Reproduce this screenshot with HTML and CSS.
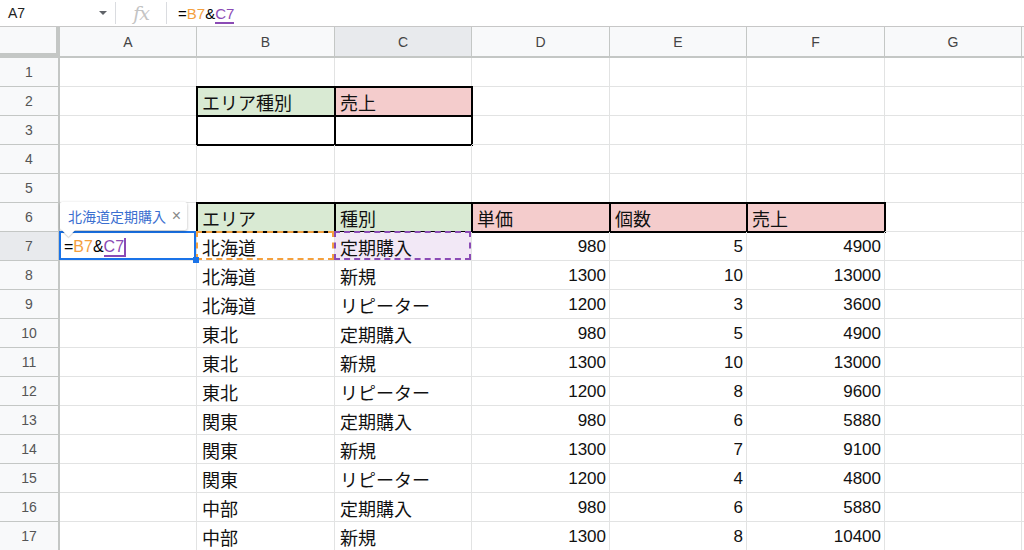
FILE: index.html
```html
<!DOCTYPE html>
<html lang="ja">
<head>
<meta charset="utf-8">
<link rel="stylesheet" href="styles.css">
</head>
<body>
<div class="fbar">
  <div class="namebox"><span class="name">A7</span><span class="caret"></span></div>
  <div class="sep"></div>
  <div class="fx">fx</div>
  <div class="sep"></div>
  <div class="formula">=<span class="ro">B7</span>&amp;<span class="rp">C7</span></div>
</div>
<div class="sheet">
  <div class="corner"></div>
  <div class="ch">A</div><div class="ch">B</div><div class="ch hl">C</div><div class="ch">D</div><div class="ch">E</div><div class="ch">F</div><div class="ch">G</div><div class="ch"></div>

  <div class="rh">1</div><div class="c"></div><div class="c"></div><div class="c"></div><div class="c"></div><div class="c"></div><div class="c"></div><div class="c"></div><div class="c"></div>
  <div class="rh">2</div><div class="c"></div><div class="c g bx"><span class="jp">エリア種別</span></div><div class="c r bx"><span class="jp">売上</span></div><div class="c"></div><div class="c"></div><div class="c"></div><div class="c"></div><div class="c"></div>
  <div class="rh">3</div><div class="c"></div><div class="c bx"></div><div class="c bx"></div><div class="c"></div><div class="c"></div><div class="c"></div><div class="c"></div><div class="c"></div>
  <div class="rh">4</div><div class="c"></div><div class="c"></div><div class="c"></div><div class="c"></div><div class="c"></div><div class="c"></div><div class="c"></div><div class="c"></div>
  <div class="rh">5</div><div class="c"></div><div class="c"></div><div class="c"></div><div class="c"></div><div class="c"></div><div class="c"></div><div class="c"></div><div class="c"></div>
  <div class="rh">6</div><div class="c"></div><div class="c g bx"><span class="jp">エリア</span></div><div class="c g bx"><span class="jp">種別</span></div><div class="c r bx"><span class="jp">単価</span></div><div class="c r bx"><span class="jp">個数</span></div><div class="c r bx"><span class="jp">売上</span></div><div class="c"></div><div class="c"></div>
  <div class="rh hl">7</div>
  <div class="c sel">
    <div class="tip"><span class="tiptext">北海道定期購入</span><span class="tipx">×</span></div>
    <span class="edit">=<span class="ro">B7</span>&amp;<span class="rp cur">C7</span></span>
  </div>
  <div class="c dash-o"><span class="jp">北海道</span></div><div class="c dash-p"><span class="jp">定期購入</span></div><div class="c n">980</div><div class="c n">5</div><div class="c n">4900</div><div class="c"></div><div class="c"></div>
  <div class="rh">8</div><div class="c"></div><div class="c"><span class="jp">北海道</span></div><div class="c"><span class="jp">新規</span></div><div class="c n">1300</div><div class="c n">10</div><div class="c n">13000</div><div class="c"></div><div class="c"></div>
  <div class="rh">9</div><div class="c"></div><div class="c"><span class="jp">北海道</span></div><div class="c"><span class="jp">リピーター</span></div><div class="c n">1200</div><div class="c n">3</div><div class="c n">3600</div><div class="c"></div><div class="c"></div>
  <div class="rh">10</div><div class="c"></div><div class="c"><span class="jp">東北</span></div><div class="c"><span class="jp">定期購入</span></div><div class="c n">980</div><div class="c n">5</div><div class="c n">4900</div><div class="c"></div><div class="c"></div>
  <div class="rh">11</div><div class="c"></div><div class="c"><span class="jp">東北</span></div><div class="c"><span class="jp">新規</span></div><div class="c n">1300</div><div class="c n">10</div><div class="c n">13000</div><div class="c"></div><div class="c"></div>
  <div class="rh">12</div><div class="c"></div><div class="c"><span class="jp">東北</span></div><div class="c"><span class="jp">リピーター</span></div><div class="c n">1200</div><div class="c n">8</div><div class="c n">9600</div><div class="c"></div><div class="c"></div>
  <div class="rh">13</div><div class="c"></div><div class="c"><span class="jp">関東</span></div><div class="c"><span class="jp">定期購入</span></div><div class="c n">980</div><div class="c n">6</div><div class="c n">5880</div><div class="c"></div><div class="c"></div>
  <div class="rh">14</div><div class="c"></div><div class="c"><span class="jp">関東</span></div><div class="c"><span class="jp">新規</span></div><div class="c n">1300</div><div class="c n">7</div><div class="c n">9100</div><div class="c"></div><div class="c"></div>
  <div class="rh">15</div><div class="c"></div><div class="c"><span class="jp">関東</span></div><div class="c"><span class="jp">リピーター</span></div><div class="c n">1200</div><div class="c n">4</div><div class="c n">4800</div><div class="c"></div><div class="c"></div>
  <div class="rh">16</div><div class="c"></div><div class="c"><span class="jp">中部</span></div><div class="c"><span class="jp">定期購入</span></div><div class="c n">980</div><div class="c n">6</div><div class="c n">5880</div><div class="c"></div><div class="c"></div>
  <div class="rh">17</div><div class="c"></div><div class="c"><span class="jp">中部</span></div><div class="c"><span class="jp">新規</span></div><div class="c n">1300</div><div class="c n">8</div><div class="c n">10400</div><div class="c"></div><div class="c"></div>
</div>
</body>
</html>
```
FILE: styles.css
```css
* { box-sizing: border-box; }
html, body { margin: 0; padding: 0; background: #fff; overflow: hidden; }
body {
  width: 1024px; height: 550px;
  font-family: "Liberation Sans", Arial, "Noto Sans CJK JP", sans-serif;
  color: #000;
}

.fbar {
  height: 27px;
  display: flex;
  align-items: center;
  border-bottom: 1px solid #c7c7c7;
  background: #fff;
}
.namebox {
  width: 115px;
  display: flex;
  align-items: center;
  padding-left: 8px;
}
.name { font-size: 14px; color: #222; flex: 1; }
.caret {
  width: 0; height: 0;
  border-left: 4px solid transparent;
  border-right: 4px solid transparent;
  border-top: 4px solid #5f6368;
  margin-right: 8px;
}
.sep { width: 1px; height: 22px; background: #dadce0; }
.fx {
  width: 50px;
  text-align: center;
  font-family: "DejaVu Serif", "Liberation Serif", serif;
  font-style: italic;
  font-size: 19px;
  color: #c4c4c4;
  letter-spacing: -1px;
  line-height: 26px;
}
.formula { padding-left: 11px; font-size: 15px; color: #000; }
.ro { color: #f4a03e; }
.rp { color: #8b4bb5; border-bottom: 2px solid #8b4bb5; }

.sheet {
  display: grid;
  grid-template-columns: 60px 137px 138px 137px 138px 137px 138px 137px 1fr;
  grid-template-rows: 31px repeat(17, 29px);
}
.corner {
  background: #f8f9fa;
  border-bottom: 2px solid #c4c7c5;
  box-shadow: inset -4px -3px 0 #c4c7c5;
}
.ch {
  background: #f8f9fa;
  border-right: 1px solid #c4c7c5;
  border-bottom: 2px solid #c4c7c5;
  display: flex; align-items: center; justify-content: center;
  font-size: 14px;
  color: #444;
}
.ch.hl, .rh.hl { background: #e8eaed; }
.rh {
  background: #f8f9fa;
  border-right: 2px solid #c4c7c5;
  border-bottom: 1px solid #c4c7c5;
  display: flex; align-items: center; justify-content: center;
  font-size: 14px;
  color: #555;
}
.c {
  border-right: 1px solid #e2e3e3;
  border-bottom: 1px solid #e2e3e3;
  display: flex; align-items: center;
  padding: 1px 4px 0 5px;
  font-size: 16px;
  white-space: nowrap;
  position: relative;
}
.jp { font-family: "Noto Sans CJK JP", sans-serif; font-size: 18px; color: #111; }
.n { justify-content: flex-end; padding-right: 3px; color: #111; font-size: 17px; }
.g { background: #d9ead3; }
.r { background: #f4cccc; }
.bx { outline: 2px solid #000; outline-offset: -1px; }

.dash-o::after, .dash-p::after, .sel::after {
  content: "";
  position: absolute;
  inset: -1px 0 0 -1px;
  pointer-events: none;
}
.dash-o::after { border: 2px dashed #f4a03e; }
.dash-p { background: #f2e8f6; }
.dash-p::after { border: 2px dashed #8b4bb5; }
.sel::after { border: 2px solid #1a73e8; }
.sel::before {
  content: "";
  position: absolute;
  right: -3px; bottom: -3px;
  width: 6px; height: 6px;
  background: #1a73e8;
  z-index: 3;
}
.edit { font-size: 16px; padding-left: 0; margin-left: -1px; }
.cur { box-shadow: 2px 0 0 #8b4bb5; }

.tip {
  position: absolute;
  left: 0;
  bottom: calc(100% + 2px);
  width: 127px;
  height: 28px;
  background: #fff;
  border-radius: 2px;
  box-shadow: 0 1px 3px rgba(0,0,0,0.3);
  display: flex;
  align-items: center;
  padding: 0 6px 0 8px;
  z-index: 5;
}
.tip::after {
  content: "";
  position: absolute;
  left: 4px; bottom: -5px;
  width: 9px; height: 9px;
  background: #fff;
  transform: rotate(45deg);
  box-shadow: 1px 1px 1px rgba(0,0,0,0.15);
}
.tiptext {
  flex: 1;
  font-family: "Noto Sans CJK JP", sans-serif;
  font-size: 14px;
  color: #3b6fd0;
}
.tipx { font-size: 16px; color: #888; }
```
